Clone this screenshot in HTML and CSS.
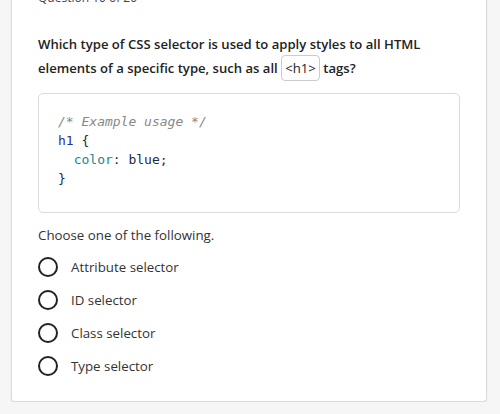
FILE: index.html
```html
<!DOCTYPE html>
<html lang="en">
<head>
<meta charset="utf-8">
<link rel="stylesheet" href="styles.css">
</head>
<body>
<div class="card">
  <div class="counter">Question 10 of 20</div>
  <p class="question">Which type of CSS selector is used to apply styles to all HTML elements of a specific type, such as all <code class="inline">&lt;h1&gt;</code> tags?</p>
  <pre class="code"><span class="c">/* Example usage */</span>
<span class="sel">h1</span> {
  <span class="prop">color</span>: <span class="val">blue</span>;
}</pre>
  <p class="prompt">Choose one of the following.</p>
  <ul class="options">
    <li class="option"><span class="radio"></span><span>Attribute selector</span></li>
    <li class="option"><span class="radio"></span><span>ID selector</span></li>
    <li class="option"><span class="radio"></span><span>Class selector</span></li>
    <li class="option"><span class="radio"></span><span>Type selector</span></li>
  </ul>
</div>
</body>
</html>
```
FILE: styles.css
```css
html, body {
  margin: 0;
  padding: 0;
  background: #f6f6f6;
}
body {
  font-family: "Open Sans", "Liberation Sans", sans-serif;
  color: #222;
}
.card {
  margin: -11px 13px 0 11px;
  background: #fff;
  border: 1px solid #dcdcdc;
  border-top: none;
  border-radius: 0 0 4px 4px;
  box-shadow: 0 1px 2px rgba(0,0,0,0.08);
  padding: 0 26px 25px 26px;
}
.counter {
  font-size: 12px;
  line-height: 18px;
  color: #444;
}
.question {
  margin: 25px 0 0 0;
  font-size: 13.1px;
  font-weight: 600;
  line-height: 24px;
  color: #222;
}
.inline {
  font-family: "Open Sans", "Liberation Sans", sans-serif;
  font-weight: 400;
  font-size: 13.2px;
  border: 1px solid #ccc;
  border-radius: 4px;
  padding: 3px 3px;
}
.code {
  margin: 13px 0 0 0;
  border: 1px solid #dcdcdc;
  border-radius: 5px;
  padding: 18px 19px 24px 19px;
  font-family: "DejaVu Sans Mono", monospace;
  font-size: 13px;
  line-height: 19px;
  color: #1d2a44;
}
.c { color: #888; font-style: italic; }
.sel { color: #2e2e9a; }
.prop { color: #128a8a; }
.val { color: #1d2a44; }
.prompt {
  margin: 12px 0 0 0;
  font-size: 13.3px;
  line-height: 20px;
  color: #333;
}
.options {
  list-style: none;
  margin: 12px 0 0 0;
  padding: 0;
  display: flex;
  flex-direction: column;
  gap: 13px;
}
.option {
  display: flex;
  align-items: center;
  gap: 13px;
  font-size: 13.3px;
  line-height: 20px;
  color: #333;
}
.radio {
  width: 16px;
  height: 16px;
  border: 2px solid #222;
  border-radius: 50%;
  flex: none;
}
```
